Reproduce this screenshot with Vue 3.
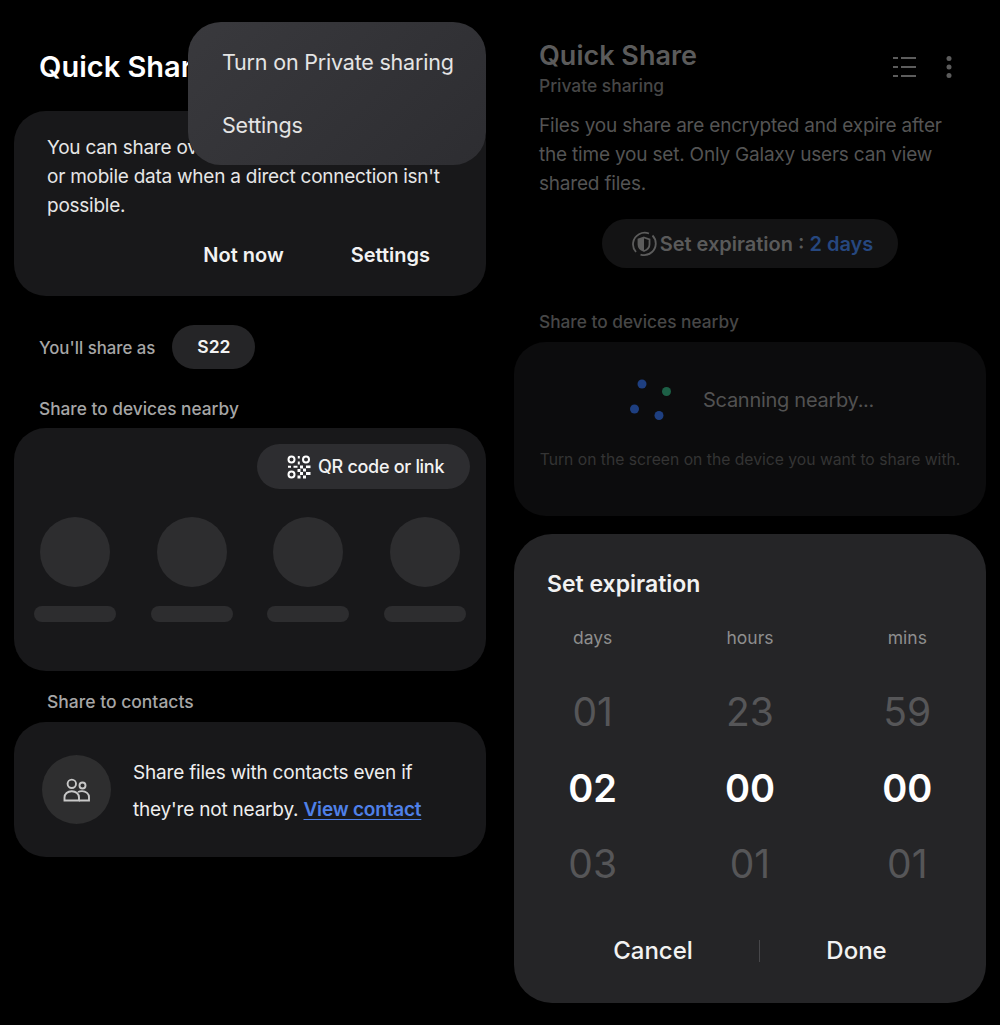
<template>
  <div class="screens">
    <section class="column">
      <header class="head">
        <h1 class="title">Quick Share</h1>
      </header>

      <div class="card notice">
        <p class="notice-text">You can share over the internet using Wi-Fi<br />or mobile data when a direct connection isn't possible.</p>
        <div class="notice-actions">
          <button class="text-btn">Not now</button>
          <button class="text-btn">Settings</button>
        </div>
      </div>

      <div class="share-as">
        <span class="share-as-label">You'll share as</span>
        <span class="device-name">S22</span>
      </div>

      <h2 class="section-label">Share to devices nearby</h2>
      <div class="card nearby">
        <div class="nearby-top">
          <button class="qr-btn">
            <svg class="qr-icon" width="24" height="24" viewBox="0 0 24 24" fill="none" stroke="#fff" stroke-width="2">
              <circle cx="4.5" cy="4.5" r="3" />
              <circle cx="19" cy="4.5" r="3" />
              <circle cx="4.5" cy="19.5" r="3" />
              <path d="M11.8 1v2.5M11.8 6.5v3M1 11.8h3M6.5 11.8h4" />
              <g fill="#fff" stroke="none">
                <rect x="13" y="10.5" width="3" height="3" />
                <rect x="19" y="10.5" width="4.5" height="2.6" />
                <rect x="10.5" y="14" width="3" height="3" />
                <rect x="16" y="13.5" width="3" height="3" />
                <rect x="13" y="17" width="3" height="3" />
                <rect x="19" y="17" width="4.5" height="3" />
                <rect x="10.5" y="20.5" width="3" height="3" />
                <rect x="16" y="20.5" width="3" height="3" />
              </g>
            </svg>
            <span>QR code or link</span>
          </button>
        </div>
        <div class="placeholders">
          <div v-for="n in 4" :key="n" class="placeholder">
            <div class="placeholder-circle"></div>
            <div class="placeholder-bar"></div>
          </div>
        </div>
      </div>

      <h2 class="section-label contacts-label">Share to contacts</h2>
      <div class="card contacts">
        <div class="contact-avatar">
          <svg width="28" height="28" viewBox="0 0 28 28" fill="none" stroke="#c8c8c8" stroke-width="1.900">
            <circle cx="8.800" cy="7.800" r="4.200" />
            <circle cx="19.500" cy="9.500" r="3" />
            <path d="M1.500 24.500v-3c0-3.500 3-6.300 7.250-6.300s7.250 2.800 7.250 6.300v3z" />
            <path d="M15 16c1.100-.6 2.500-.9 4-.9 4 0 7 2.700 7 6v3.400h-10" />
          </svg>
        </div>
        <p class="contact-text">Share files with contacts even if they're not nearby. <a class="contact-link">View contact</a></p>
      </div>

      <div class="menu">
        <div class="menu-item">Turn on Private sharing</div>
        <div class="menu-item">Settings</div>
      </div>
    </section>

    <section class="column">
      <header class="head-dim">
        <div>
          <h1 class="title-dim">Quick Share</h1>
          <div class="subtitle-dim">Private sharing</div>
        </div>
        <div class="head-icons">
          <svg width="26" height="24" viewBox="0 0 26 24" fill="none" stroke="#5c5c5c" stroke-width="1.800">
            <path d="M1 3h5M9 3h15M1 12h5M9 12h15M1 21h5M9 21h15" />
          </svg>
          <svg width="6" height="24" viewBox="0 0 6 24" fill="#5c5c5c">
            <circle cx="3" cy="3.500" r="2.500" />
            <circle cx="3" cy="12" r="2.500" />
            <circle cx="3" cy="20.500" r="2.500" />
          </svg>
        </div>
      </header>
      <p class="desc-dim">Files you share are encrypted and expire after the time you set. Only Galaxy users can view shared files.</p>

      <div class="expiry-wrap">
        <div class="expiry-pill">
          <svg width="26" height="26" viewBox="0 0 26 26" fill="none" stroke="#5c5c5c" stroke-width="1.800">
            <path d="M5 21a11.500 11.500 0 0 1 3-17.800c3-1.700 6.700-2 10-.7" />
            <path d="M21.500 4.500a11.500 11.500 0 0 1-.5 16.500c-3 2.900-7.500 3.800-11.500 2.600" />
            <path d="M13 6.500l5.500 2v5c0 3-2.200 5.300-5.500 6.500-3.300-1.200-5.500-3.500-5.500-6.500v-5z" />
            <path d="M13 6.500l-5.500 2v5c0 3 2.200 5.300 5.500 6.500z" fill="#5c5c5c" stroke="none" />
          </svg>
          <span>Set expiration : <em class="expiry-value">2 days</em></span>
        </div>
      </div>

      <h2 class="section-label-dim">Share to devices nearby</h2>
      <div class="scan-card">
        <div class="scan-row">
          <svg class="scan-dots" width="44" height="44" viewBox="0 0 44 44">
            <circle cx="14" cy="6" r="4.500" fill="#1e3f80" />
            <circle cx="38.500" cy="13.500" r="4.500" fill="#1d6046" />
            <circle cx="6.500" cy="31" r="4.500" fill="#1e3f80" />
            <circle cx="31" cy="37.500" r="4.500" fill="#1e3f80" />
          </svg>
          <span class="scan-text">Scanning nearby...</span>
        </div>
        <p class="scan-hint">Turn on the screen on the device you want to share with.</p>
      </div>

      <div class="dialog">
        <h3 class="dialog-title">Set expiration</h3>
        <div class="picker">
          <div v-for="col in pickerColumns" :key="col.unit" class="picker-col">
            <div class="picker-unit">{{ col.unit }}</div>
            <div class="picker-num">{{ col.prev }}</div>
            <div class="picker-num picker-current">{{ col.current }}</div>
            <div class="picker-num">{{ col.next }}</div>
          </div>
        </div>
        <div class="dialog-actions">
          <button class="dialog-btn">Cancel</button>
          <span class="dialog-divider"></span>
          <button class="dialog-btn">Done</button>
        </div>
      </div>
    </section>
  </div>
</template>

<script setup>
const pickerColumns = [
  { unit: 'days', prev: '01', current: '02', next: '03' },
  { unit: 'hours', prev: '23', current: '00', next: '01' },
  { unit: 'mins', prev: '59', current: '00', next: '01' },
];
</script>

<style>
html,
body {
  background: #000;
}
</style>

<style scoped>
.screens {
  display: flex;
  gap: 28px;
  width: 1000px;
  height: 1025px;
  padding: 0 14px;
  box-sizing: border-box;
  background: #000;
  overflow: hidden;
  font-family: Inter, "Liberation Sans", sans-serif;
}

.column {
  position: relative;
  width: 472px;
  flex: none;
}

h1,
h2,
h3,
p {
  margin: 0;
}

button {
  background: none;
  border: none;
  padding: 0;
  font-family: inherit;
}

.head {
  height: 111px;
  padding: 46px 0 0 25px;
  box-sizing: border-box;
}

.title {
  font-size: 29px;
  line-height: 42px;
  font-weight: 600;
  color: #fff;
  white-space: nowrap;
}

.card {
  background: #18181a;
  border-radius: 32px;
}

.notice {
  height: 185px;
  padding: 22px 33px 0;
  box-sizing: border-box;
}

.notice-text {
  font-size: 19px;
  line-height: 29px;
  letter-spacing: -0.25px;
  color: #e6e6e6;
}

.notice-actions {
  display: flex;
  justify-content: flex-end;
  gap: 67px;
  margin-top: 21px;
  padding-right: 23px;
}

.text-btn {
  font-size: 20px;
  line-height: 28px;
  font-weight: 600;
  color: #f2f2f2;
}

.share-as {
  display: flex;
  align-items: center;
  gap: 17px;
  height: 44px;
  margin-top: 29px;
  padding-left: 25px;
}

.share-as-label {
  margin-top: 1px;
  font-size: 16.800px;
  font-weight: 500;
  color: #a6a6a6;
}

.device-name {
  width: 83px;
  height: 44px;
  border-radius: 22px;
  background: #252527;
  color: #f2f2f2;
  font-size: 17.500px;
  font-weight: 600;
  line-height: 44px;
  text-align: center;
}

.section-label {
  margin-top: 29px;
  padding-left: 25px;
  font-size: 17.300px;
  line-height: 22px;
  font-weight: 500;
  color: #a6a6a6;
}

.nearby {
  height: 243px;
  margin-top: 8px;
  padding: 16px 3px 0;
  box-sizing: border-box;
}

.nearby-top {
  display: flex;
  justify-content: flex-end;
  padding-right: 13px;
}

.qr-btn {
  display: flex;
  align-items: center;
  gap: 7px;
  width: 213px;
  height: 45px;
  padding-left: 30px;
  box-sizing: border-box;
  border-radius: 23px;
  background: #2d2d30;
  color: #f2f2f2;
  font-size: 18px;
  letter-spacing: -0.3px;
  font-weight: 500;
}

.placeholders {
  display: grid;
  grid-template-columns: repeat(4, 1fr);
  margin-top: 28px;
}

.placeholder {
  display: flex;
  flex-direction: column;
  align-items: center;
}

.placeholder-circle {
  width: 70px;
  height: 70px;
  border-radius: 50%;
  background: #2d2d2f;
}

.placeholder-bar {
  width: 82px;
  height: 16px;
  margin-top: 19px;
  border-radius: 8px;
  background: #2d2d2f;
}

.contacts-label {
  margin-top: 20px;
  padding-left: 33px;
  font-size: 17.500px;
}

.contacts {
  display: flex;
  align-items: center;
  gap: 22px;
  height: 135px;
  margin-top: 9px;
  padding-left: 28px;
  box-sizing: border-box;
}

.contact-avatar {
  display: flex;
  align-items: center;
  justify-content: center;
  width: 69px;
  height: 69px;
  flex: none;
  border-radius: 50%;
  background: #2e2e2f;
}

.contact-text {
  width: 310px;
  padding-top: 2px;
  font-size: 19px;
  line-height: 37px;
  letter-spacing: -0.2px;
  color: #eee;
}

.contact-link {
  color: #4f80e8;
  font-weight: 600;
  text-decoration: underline;
  text-underline-offset: 3px;
}

.menu {
  position: absolute;
  top: 22px;
  left: 174px;
  width: 298px;
  height: 143px;
  padding-top: 9px;
  box-sizing: border-box;
  border-radius: 33px;
  background: linear-gradient(135deg, #39393d, #2d2d31);
}

.menu-item {
  padding-left: 34px;
  font-size: 21.500px;
  line-height: 63px;
  letter-spacing: -0.2px;
  color: #e4e4e4;
  white-space: nowrap;
}

.head-dim {
  display: flex;
  justify-content: space-between;
  padding: 37px 34px 0 25px;
}

.title-dim {
  font-size: 27px;
  line-height: 37px;
  font-weight: 600;
  color: #5b5b5b;
}

.subtitle-dim {
  font-size: 17.400px;
  line-height: 24px;
  font-weight: 500;
  color: #474747;
}

.head-icons {
  display: flex;
  gap: 28px;
  margin-top: 18px;
  align-items: flex-start;
}

.desc-dim {
  margin-top: 13px;
  padding: 0 25px;
  font-size: 19px;
  line-height: 29px;
  letter-spacing: -0.2px;
  color: #545454;
}

.expiry-wrap {
  display: flex;
  justify-content: center;
  margin-top: 21px;
}

.expiry-pill {
  display: flex;
  align-items: center;
  justify-content: center;
  gap: 3px;
  width: 296px;
  height: 49px;
  padding-left: 4px;
  box-sizing: border-box;
  border-radius: 25px;
  background: #131314;
  color: #5a5a5a;
  font-size: 20px;
  font-weight: 600;
}

.expiry-value {
  font-style: normal;
  color: #26477f;
}

.section-label-dim {
  margin-top: 43px;
  padding-left: 25px;
  font-size: 17.300px;
  line-height: 22px;
  font-weight: 500;
  color: #474747;
}

.scan-card {
  height: 174px;
  margin-top: 9px;
  border-radius: 32px;
  background: #0c0c0d;
  box-sizing: border-box;
  padding-top: 36px;
}

.scan-row {
  display: flex;
  align-items: center;
  gap: 31px;
  padding-left: 114px;
}

.scan-text {
  font-size: 20px;
  letter-spacing: -0.28px;
  color: #525252;
}

.scan-hint {
  margin-top: 27px;
  font-size: 15.700px;
  line-height: 22px;
  color: #343434;
  text-align: center;
  white-space: nowrap;
}

.dialog {
  height: 469px;
  margin-top: 18px;
  padding-top: 35px;
  box-sizing: border-box;
  border-radius: 38px;
  background: #252527;
}

.dialog-title {
  padding-left: 33px;
  font-size: 23px;
  line-height: 30px;
  font-weight: 600;
  color: #f2f2f2;
}

.picker {
  display: grid;
  grid-template-columns: repeat(3, 1fr);
  margin-top: 24px;
  text-align: center;
}

.picker-unit {
  font-size: 17.500px;
  line-height: 30px;
  color: #8e8e8e;
  margin-bottom: 21px;
}

.picker-num {
  font-size: 39px;
  line-height: 76px;
  color: #565658;
}

.picker-current {
  color: #fff;
  font-size: 38px;
  font-weight: 600;
}

.dialog-actions {
  display: grid;
  grid-template-columns: 212px 1px 1fr;
  align-items: center;
  margin-top: 32px;
  padding: 0 33px;
}

.dialog-btn {
  font-size: 24px;
  line-height: 34px;
  font-weight: 500;
  color: #f2f2f2;
}

.dialog-divider {
  height: 22px;
  background: #47474a;
}
</style>
